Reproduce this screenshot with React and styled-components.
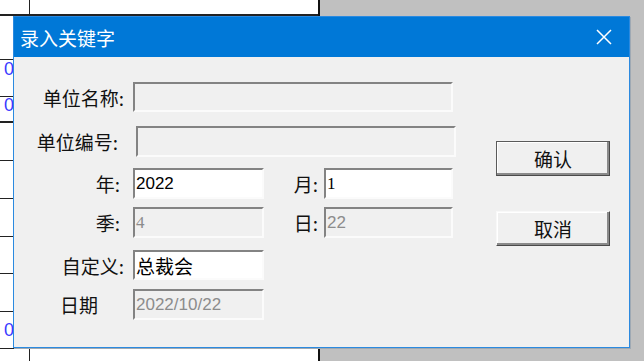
import styled, { createGlobalStyle } from "styled-components";

const Global = createGlobalStyle`
  html, body { margin: 0; padding: 0; overflow: hidden; background: #c0c0c0; }
`;

const CJK = `"Noto Sans CJK SC", "Noto Sans", sans-serif`;

const Desktop = styled.div`
  position: relative;
  width: 644px;
  height: 361px;
  overflow: hidden;
  display: grid;
  grid-template-columns: 320px 1fr;
  background: #c0c0c0;
`;

const Sheet = styled.div`
  background: #fff;
  border-right: 2px solid #111;
  display: flex;
  flex-direction: column;
`;

const SheetRow = styled.div`
  flex: 0 0 ${(p) => p.$h}px;
  display: grid;
  grid-template-columns: 30px 1fr;
  border-bottom: ${(p) => (p.$thick ? 2 : 1)}px solid #222;
  box-sizing: border-box;
`;

const SheetCell = styled.div`
  border-right: 1px solid #222;
  color: #3a3aff;
  font: 18px/16px "Liberation Sans", sans-serif;
  padding: ${(p) => p.$pt || 0}px 0 0 4px;
`;

const Window = styled.div`
  position: absolute;
  left: 13px;
  top: 16px;
  width: 617px;
  height: 332px;
  box-sizing: border-box;
  border: 1px solid #2b8ae0;
  background: #f0f0f0;
  box-shadow: 1px 1px 0 #9fa9b3;
  display: flex;
  flex-direction: column;
`;

const TitleBar = styled.div`
  flex: 0 0 40px;
  background: #0078d7;
  display: flex;
  align-items: center;
  justify-content: space-between;
  padding: 0 17px 0 6px;
  color: #fff;
  font: 19px ${CJK};
`;

const Body = styled.div`
  flex: 1;
  display: flex;
`;

const Form = styled.div`
  width: 482px;
  display: flex;
  flex-direction: column;
`;

const Row = styled.div`
  display: flex;
  align-items: center;
  height: ${(p) => p.$h}px;
  margin-top: ${(p) => p.$mt}px;
`;

const Label = styled.div`
  width: ${(p) => p.$w}px;
  box-sizing: border-box;
  text-align: ${(p) => p.$align || "right"};
  padding-left: ${(p) => p.$pl || 0}px;
  margin-right: ${(p) => p.$gap}px;
  font: 19px ${CJK};
  color: #111;
  white-space: nowrap;
`;

const Field = styled.div`
  width: ${(p) => p.$w}px;
  height: 100%;
  box-sizing: border-box;
  border-top: 2px solid #838383;
  border-left: 2px solid #838383;
  border-right: 2px solid #fbfbfb;
  border-bottom: 2px solid #fbfbfb;
  background: ${(p) => (p.$disabled ? "#f0f0f0" : "#fff")};
  color: ${(p) => (p.$disabled ? "#8c8c8c" : "#000")};
  font-family: ${(p) =>
    p.$serif ? `"Liberation Serif", serif` : p.$cjk ? CJK : `"Liberation Sans", sans-serif`};
  font-size: ${(p) => (p.$cjk ? 19 : 17)}px;
  display: flex;
  align-items: center;
  padding-left: 1px;
  white-space: nowrap;
`;

const ButtonCol = styled.div`
  display: flex;
  flex-direction: column;
  gap: 35px;
  padding-top: 84px;
`;

const Button = styled.div`
  width: 114px;
  height: 35px;
  box-sizing: border-box;
  border: 1px solid ${(p) => (p.$default ? "#5a5a5a" : "#f8f8f8")};
  border-right-color: #4a4a4a;
  border-bottom-color: #4a4a4a;
  box-shadow: inset -2px -2px 0 #8a8a8a, inset 1px 1px 0 #fff;
  background: #f0f0f0;
  display: flex;
  align-items: center;
  justify-content: center;
  font: 19px ${CJK};
  color: #111;
`;

const Close = () => (
  <svg width="16" height="16" viewBox="0 0 16 16">
    <path d="M1 1 L15 15 M15 1 L1 15" stroke="#fff" strokeWidth="1.5" fill="none" />
  </svg>
);

const sheetRows = [
  { h: 16, thick: true },
  { h: 44 },
  { h: 37, n: "0", pt: 1 },
  { h: 26, thick: true, n: "0", pt: 0 },
  { h: 38 },
  { h: 38 },
  { h: 38 },
  { h: 37 },
  { h: 38 },
  { h: 37, n: "0", pt: 10 },
  { h: 20 },
];

export default function App() {
  return (
    <>
      <Global />
      <Desktop>
        <Sheet>
          {sheetRows.map((r, i) => (
            <SheetRow key={i} $h={r.h} $thick={r.thick}>
              <SheetCell $pt={r.pt}>{r.n || ""}</SheetCell>
              <div />
            </SheetRow>
          ))}
        </Sheet>
        <div />
        <Window>
          <TitleBar>
            <span>录入关键字</span>
            <Close />
          </TitleBar>
          <Body>
            <Form>
              <Row $h={30} $mt={25}>
                <Label $w={110} $gap={9}>单位名称:</Label>
                <Field $w={320} $disabled />
              </Row>
              <Row $h={31} $mt={14}>
                <Label $w={104} $gap={18}>单位编号:</Label>
                <Field $w={320} $disabled />
              </Row>
              <Row $h={31} $mt={11}>
                <Label $w={106} $gap={13}>年:</Label>
                <Field $w={131}>2022</Field>
                <Label $w={54} $gap={6}>月:</Label>
                <Field $w={129} $serif>1</Field>
              </Row>
              <Row $h={31} $mt={8}>
                <Label $w={106} $gap={13}>季:</Label>
                <Field $w={131} $disabled $serif>4</Field>
                <Label $w={54} $gap={6}>日:</Label>
                <Field $w={129} $disabled>22</Field>
              </Row>
              <Row $h={30} $mt={12}>
                <Label $w={110} $gap={9}>自定义:</Label>
                <Field $w={131} $cjk>总裁会</Field>
              </Row>
              <Row $h={31} $mt={9}>
                <Label $w={110} $gap={9} $align="left" $pl={46}>日期</Label>
                <Field $w={131} $disabled>2022/10/22</Field>
              </Row>
            </Form>
            <ButtonCol>
              <Button $default>确认</Button>
              <Button>取消</Button>
            </ButtonCol>
          </Body>
        </Window>
      </Desktop>
    </>
  );
}
